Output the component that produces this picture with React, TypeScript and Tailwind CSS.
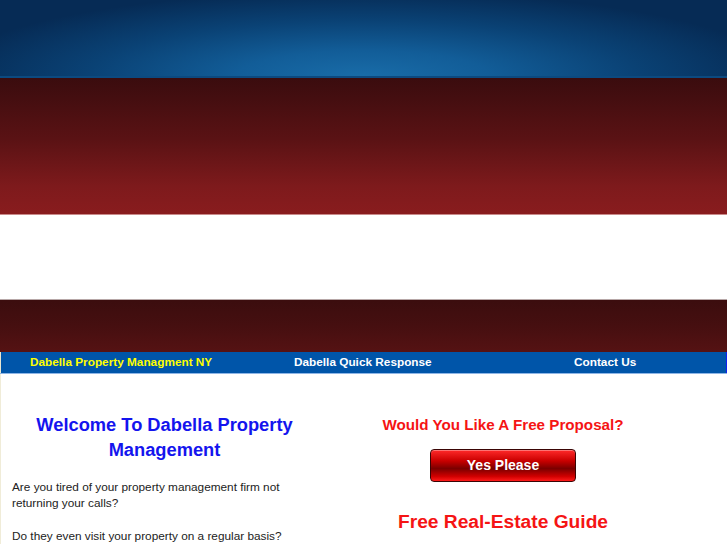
import React from "react";

export default function App() {
  return (
    <div className="w-[727px] h-[545px] overflow-hidden bg-white" style={{ fontFamily: '"Liberation Sans", Arial, sans-serif' }}>
      {/* blue header */}
      <div className="h-[76px] bg-[radial-gradient(ellipse_420px_85px_at_50%_100%,#196ca8_0%,#125d98_30%,#0a4275_65%,#062b55_100%)]" />
      <div className="h-[2px] bg-[#0c4a80]" />
      {/* red gradient band */}
      <div className="h-[136px] bg-[linear-gradient(to_bottom,#3a0c0e_0%,#5a1214_45%,#7e1a1c_80%,#891c1e_100%)]" />
      <div className="h-[1px] bg-[#c98a8a]" />
      {/* white band */}
      <div className="h-[84px] bg-white" />
      <div className="h-[1px] bg-[#b7a7a7]" />
      {/* dark red band */}
      <div className="h-[52px] bg-[linear-gradient(to_bottom,#3b0d0e_0%,#460f10_50%,#551213_100%)]" />
      {/* nav */}
      <div className="flex h-[21px] items-center bg-[#0055a9] border-l border-l-[#eae6d0] border-r border-r-[#1020f0] text-[11.8px] font-bold">
        <div className="w-[243px] pl-[29px] text-[#ffff00]">Dabella Property Managment NY</div>
        <div className="w-[278px] pl-[50px] text-white">Dabella Quick Response</div>
        <div className="pl-[52px] text-white">Contact Us</div>
      </div>
      <div className="h-[1px] bg-[#8fb6e6]" />
      {/* content */}
      <div className="flex border-l border-l-[#f0ecd8]">
        <div className="w-[327px] pt-[38px]">
          <h1 className="text-center text-[18.3px] font-bold leading-[25px] text-[#1414ee]">
            Welcome To Dabella Property
            <br />
            Management
          </h1>
          <div className="mt-[17px] pl-[11px] text-[11.8px] leading-[16px] text-[#222]">
            <p className="w-[290px]">Are you tired of your property management firm not returning your calls?</p>
            <p className="mt-[17px]">Do they even visit your property on a regular basis?</p>
          </div>
        </div>
        <div className="flex w-[350px] flex-col items-center pt-[41px]">
          <div className="text-[15.2px] font-bold leading-[20px] text-[#f51414]">Would You Like A Free Proposal?</div>
          <div className="mt-[14px] flex h-[33px] w-[146px] items-center justify-center rounded-[4px] border border-[#3a0505] bg-[linear-gradient(to_bottom,#ff2a2a_0%,#c90000_35%,#7a0000_60%,#d00000_85%,#ff1a1a_100%)] shadow-[inset_0_1px_0_rgba(255,255,255,0.35)]">
            <span className="text-[14px] font-bold text-white" style={{ fontFamily: '"Liberation Sans Narrow", "Liberation Sans", Arial, sans-serif' }}>Yes Please</span>
          </div>
          <div className="mt-[28px] text-[19.2px] font-bold leading-[24px] text-[#f51414]">Free Real-Estate Guide</div>
        </div>
      </div>
    </div>
  );
}
